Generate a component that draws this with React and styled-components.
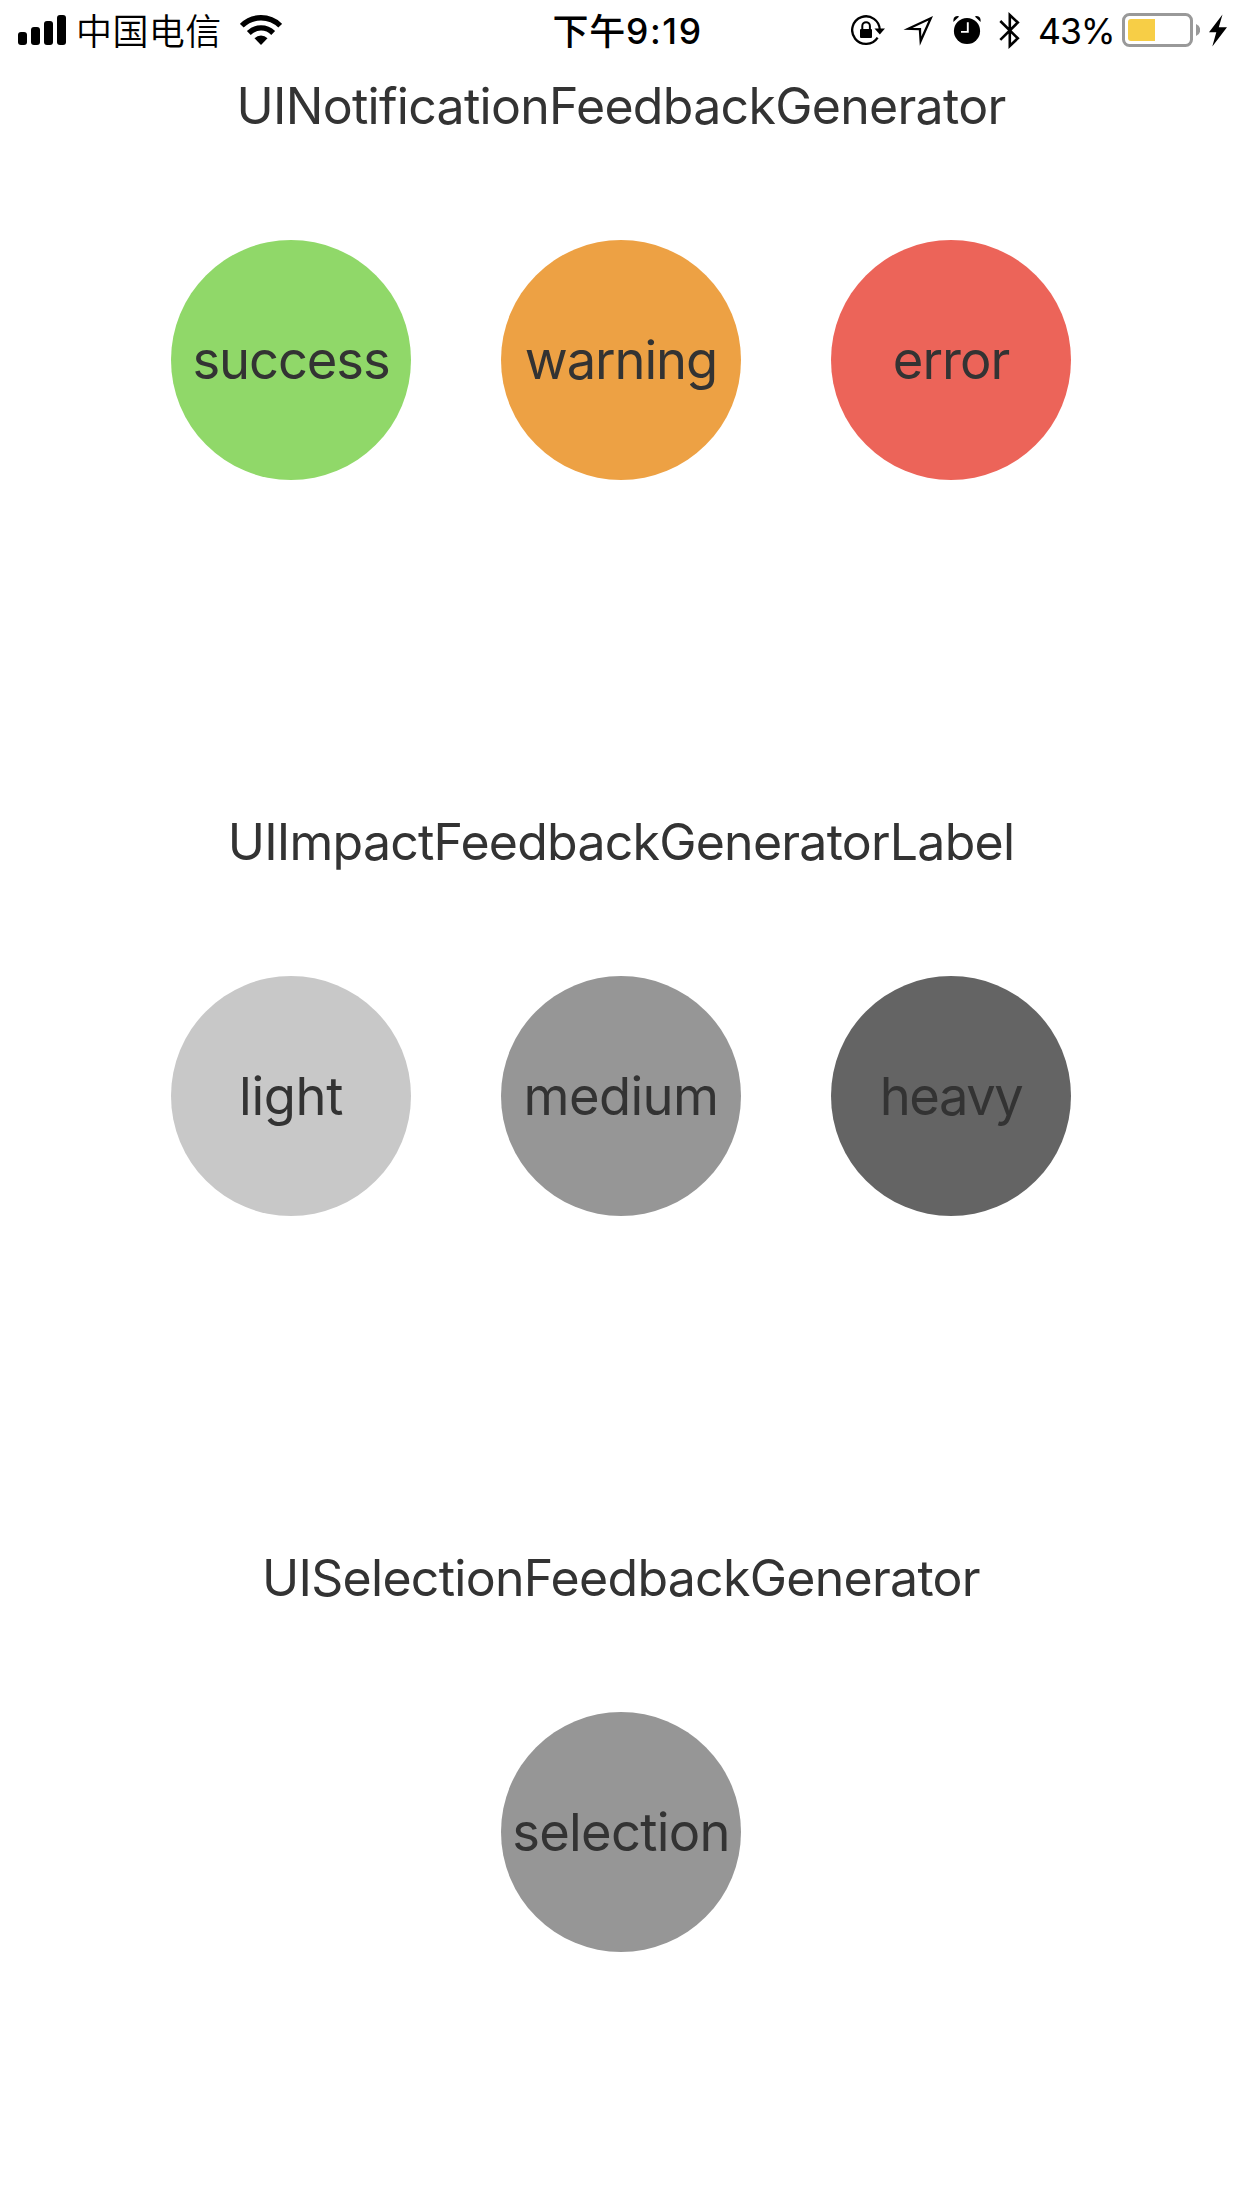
import React from "react";
import styled, { createGlobalStyle } from "styled-components";

const GlobalStyle = createGlobalStyle`
  * { box-sizing: border-box; }
  body { margin: 0; background: #fff; }
`;

const Screen = styled.main`
  width: 1242px;
  height: 2208px;
  overflow: hidden;
  background: #fff;
  color: #333;
  font-family: Inter, "Noto Sans CJK SC", sans-serif;
`;

const StatusBar = styled.header`
  display: grid;
  grid-template-columns: 1fr auto 1fr;
  height: 60px;
  padding: 0 15px 0 18px;
  color: #000;
`;

const StatusGroup = styled.div`
  display: flex;
  align-items: center;
  justify-content: ${(p) => p.$justify || "flex-start"};
  height: 60px;
`;

const Glyph = styled.svg`
  display: block;
  flex: none;
  margin-left: ${(p) => p.$gap || 0}px;
`;

const Carrier = styled.span`
  margin-left: 10px;
  width: 144px;
  height: 60px;
  font: 350 36px/58px "Noto Sans CJK SC", sans-serif;
  letter-spacing: 0.4px;
  white-space: nowrap;
`;

const Clock = styled.span`
  display: flex;
  padding-left: 10px;
  font: 550 35.5px/63px Inter, sans-serif;
  letter-spacing: 1.6px;
  white-space: nowrap;
`;

const Meridiem = styled.span`
  font: 500 36px/58px "Noto Sans CJK SC", sans-serif;
  letter-spacing: 0.8px;
`;

const Percent = styled.span`
  width: 75px;
  height: 60px;
  margin-left: 17px;
  font: 400 35.5px/63px Inter, sans-serif;
  letter-spacing: -1px;
  white-space: nowrap;
`;

const Section = styled.section`
  display: flex;
  flex-direction: column;
  align-items: center;
  height: 736px;
  padding-top: 16px;
`;

const Title = styled.h2`
  margin: 0 0 104px;
  font-weight: 400;
  font-size: 50px;
  line-height: 60px;
  letter-spacing: ${(p) => p.$tracking}px;
  white-space: nowrap;
`;

const Row = styled.div`
  display: flex;
  gap: 90px;
`;

const Round = styled.button`
  display: flex;
  align-items: center;
  justify-content: center;
  width: 240px;
  height: 240px;
  padding: 0;
  border: 0;
  border-radius: 50%;
  background: ${(p) => p.$color};
  color: #333;
  font: 400 52.5px/64px Inter, sans-serif;
  letter-spacing: ${(p) => p.$tracking}px;
`;

const SignalIcon = () => (
  <Glyph width="48" height="60" viewBox="18 0 48 60">
    <rect x="18" y="32" width="9" height="13" rx="3" />
    <rect x="31" y="27" width="9" height="18" rx="3" />
    <rect x="44" y="21" width="9" height="24" rx="3" />
    <rect x="57" y="15" width="9" height="30" rx="3" />
  </Glyph>
);

const WifiIcon = () => (
  <Glyph $gap={20} width="42" height="60" viewBox="240 0 42 60">
    <path d="M241.8 25.7a27.2 27.2 0 0 1 38.4 0M248.8 33a17.2 17.2 0 0 1 24.4 0" fill="none" stroke="#000" strokeWidth="5.4" />
    <path d="M261 45l-6.5-6.7a9.2 9.2 0 0 1 13 0z" />
  </Glyph>
);

const RotationLockIcon = () => (
  <Glyph width="34" height="60" viewBox="851 0 34 60">
    <path d="M879.8 30A13.8 13.8 0 1 0 877.6 37.6" fill="none" stroke="#000" strokeWidth="2.3" />
    <path d="M874.5 28.5h10.5l-5.2 6z" />
    <rect x="860" y="29" width="12" height="9" rx="1" />
    <path d="M862.3 30v-4a3.8 3.8 0 0 1 7.6 0v4" fill="none" stroke="#000" strokeWidth="2" />
  </Glyph>
);

const LocationIcon = () => (
  <Glyph $gap={18} width="30" height="60" viewBox="903 0 30 60">
    <path d="M903.5 29.8L933 16 919.8 45.7 918.8 30.2zM912.5 27.9h8.6l.2 8.5 7.2-16z" fillRule="evenodd" />
  </Glyph>
);

const AlarmIcon = () => (
  <Glyph $gap={20} width="28" height="60" viewBox="953 0 28 60">
    <circle cx="967" cy="31" r="13.1" />
    <path d="M953.4 22v-2.2a3.9 3.9 0 0 1 5.8-3.2zM980.6 22v-2.2a3.9 3.9 0 0 0-5.8-3.2z" />
    <path d="M967.8 22.3v9.6H961" fill="none" stroke="#fff" strokeWidth="1.9" />
  </Glyph>
);

const BluetoothIcon = () => (
  <Glyph $gap={18} width="22" height="60" viewBox="999 0 22 60">
    <path d="M1000.3 21l17.5 17.3-8 7.7V15l8 7.5L1000.3 39.8" fill="none" stroke="#000" strokeWidth="2.6" />
  </Glyph>
);

const BatteryIcon = () => (
  <Glyph $gap={9} width="78" height="60" viewBox="1122 0 78 60">
    <rect x="1123.5" y="14.5" width="68" height="31" rx="6" fill="none" stroke="#999" strokeWidth="3" />
    <path d="M1155 19v22h-24a3 3 0 0 1-3-3V22a3 3 0 0 1 3-3z" fill="#f7ce46" />
    <path d="M1196 24a6.4 6.4 0 0 1 0 12z" fill="#999" />
  </Glyph>
);

const BoltIcon = () => (
  <Glyph $gap={9} width="18" height="60" viewBox="1209 0 18 60">
    <path d="M1222.5 14.5L1209 32.3h7.3l-4 14.2L1227 27.3h-8.2z" />
  </Glyph>
);

const sections = [
  {
    title: "UINotificationFeedbackGenerator",
    tracking: -0.7,
    actions: [
      { label: "success", color: "#90d869", tracking: -1.1 },
      { label: "warning", color: "#eda144", tracking: -1.1 },
      { label: "error", color: "#ec6459", tracking: -1 },
    ],
  },
  {
    title: "UIImpactFeedbackGeneratorLabel",
    tracking: -0.76,
    actions: [
      { label: "light", color: "#c8c8c8", tracking: -0.4 },
      { label: "medium", color: "#969696", tracking: -0.6 },
      { label: "heavy", color: "#646464", tracking: -1.5 },
    ],
  },
  {
    title: "UISelectionFeedbackGenerator",
    tracking: -0.72,
    actions: [{ label: "selection", color: "#969696", tracking: -0.7 }],
  },
];

export default function App() {
  return (
    <Screen>
      <GlobalStyle />
      <StatusBar>
        <StatusGroup>
          <SignalIcon />
          <Carrier>中国电信</Carrier>
          <WifiIcon />
        </StatusGroup>
        <Clock>
          <Meridiem>下午</Meridiem>9:19
        </Clock>
        <StatusGroup $justify="flex-end">
          <RotationLockIcon />
          <LocationIcon />
          <AlarmIcon />
          <BluetoothIcon />
          <Percent>43%</Percent>
          <BatteryIcon />
          <BoltIcon />
        </StatusGroup>
      </StatusBar>
      {sections.map((s) => (
        <Section key={s.title}>
          <Title $tracking={s.tracking}>{s.title}</Title>
          <Row>
            {s.actions.map((a) => (
              <Round key={a.label} $color={a.color} $tracking={a.tracking}>
                {a.label}
              </Round>
            ))}
          </Row>
        </Section>
      ))}
    </Screen>
  );
}
